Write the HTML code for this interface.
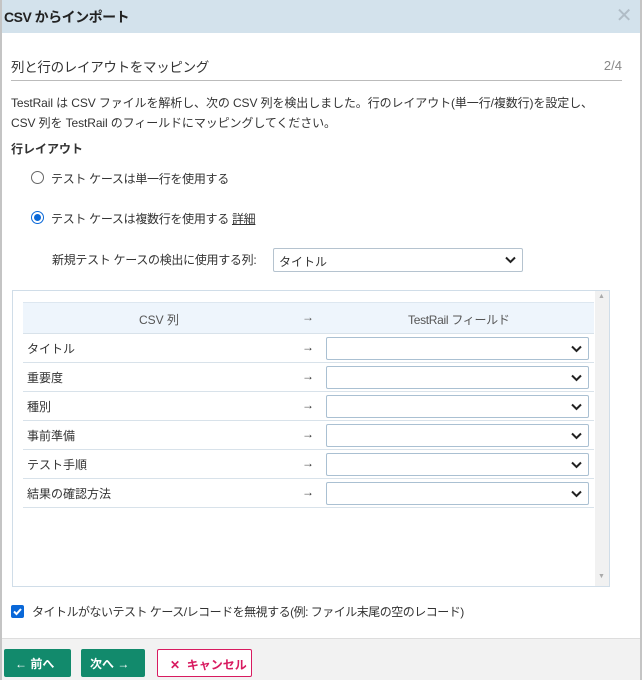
<!DOCTYPE html>
<html><head><meta charset="utf-8"><style>
*{box-sizing:border-box;margin:0;padding:0}
body{width:642px;height:680px;overflow:hidden;font-family:"Liberation Sans","Noto Sans CJK JP",sans-serif;font-size:12px;color:#333;background:#fff;position:relative;white-space:nowrap}
.abs{position:absolute}
.title{left:0;top:0;width:642px;height:33px;background:#d3e2ec;font-size:14px;font-weight:bold;padding:7px 0 0 4px;color:#222;letter-spacing:-0.5px}
.x{right:10px;top:3px;color:#b0bcc6;font-size:20px;font-weight:normal}
.sel{position:absolute;border:1px solid #aac0d2;border-radius:2px;background:#fff;height:23px}
.sel svg{position:absolute;right:6px;top:7px}
.row{position:absolute;left:23px;width:571px;height:29px;border-bottom:1px solid #d8e2ea}
.row span{position:absolute;left:4px;top:6px}
.row .ar{left:279px;font-weight:bold}
.btn{position:absolute;top:649px;height:28px;border-radius:2px;font-weight:bold;font-size:12px;padding-top:6px;white-space:nowrap}
</style></head><body>
<div class="abs title">CSV からインポート<span class="abs x">✕</span></div>
<div class="abs" style="left:0;top:0;width:2px;height:680px;background:#c4c4c4"></div>
<div class="abs" style="right:0;top:0;width:2px;height:680px;background:#c4c4c4"></div>
<div class="abs" style="left:11px;top:56px;font-size:13.5px;color:#333;letter-spacing:-0.3px">列と行のレイアウトをマッピング</div>
<div class="abs" style="right:20px;top:58px;font-size:13px;color:#888">2/4</div>
<div class="abs" style="left:11px;top:80px;width:611px;height:1px;background:#bbb"></div>
<div class="abs" style="left:11px;top:93px;font-size:12px;line-height:20px;letter-spacing:-0.1px">TestRail は CSV ファイルを解析し、次の CSV 列を検出しました。行のレイアウト(単一行/複数行)を設定し、<br>CSV 列を TestRail のフィールドにマッピングしてください。</div>
<div class="abs" style="left:11px;top:140px;font-weight:bold">行レイアウト</div>
<div class="abs" style="left:31px;top:171px;width:13px;height:13px;border:1px solid #666;border-radius:50%"></div>
<div class="abs" style="left:51px;top:170px;letter-spacing:-0.3px">テスト ケースは単一行を使用する</div>
<div class="abs" style="left:31px;top:211px;width:13px;height:13px;border:1px solid #0a68d8;border-radius:50%;background:#fff"><div style="margin:2px;width:7px;height:7px;border-radius:50%;background:#0a68d8"></div></div>
<div class="abs" style="left:51px;top:210px;letter-spacing:-0.3px">テスト ケースは複数行を使用する <u>詳細</u></div>
<div class="abs" style="left:52px;top:251px;letter-spacing:-0.3px">新規テスト ケースの検出に使用する列:</div>
<div class="sel" style="left:273px;top:248px;width:250px;height:24px;border-color:#b5c3cf"><span style="position:absolute;left:5px;top:4px">タイトル</span><svg width="11" height="8" viewBox="0 0 11 8"><path d="M1 1.5l4.5 4.5 4.5-4.5" stroke="#222" stroke-width="2" fill="none"/></svg></div>
<div class="abs" style="left:12px;top:290px;width:598px;height:297px;border:1px solid #d0dde8"></div>
<div class="abs" style="left:595px;top:291px;width:14px;height:295px;background:#f1f1f1"></div>
<div class="abs" style="left:598px;top:293px;font-size:7px;color:#aaa">▲</div>
<div class="abs" style="left:598px;top:573px;font-size:7px;color:#aaa">▼</div>
<div class="abs" style="left:23px;top:302px;width:571px;height:32px;background:#eef5fc;border-top:1px solid #dde7f0;border-bottom:1px solid #d8e2ea;color:#555">
<span class="abs" style="left:116px;top:8px">CSV 列</span><span class="abs" style="left:279px;top:7px;font-weight:bold">→</span><span class="abs" style="left:385px;top:8px;letter-spacing:-0.3px">TestRail フィールド</span></div>
<div class="row" style="top:334px"><span>タイトル</span><span class="ar">→</span></div>
<div class="row" style="top:363px"><span>重要度</span><span class="ar">→</span></div>
<div class="row" style="top:392px"><span>種別</span><span class="ar">→</span></div>
<div class="row" style="top:421px"><span>事前準備</span><span class="ar">→</span></div>
<div class="row" style="top:450px"><span>テスト手順</span><span class="ar">→</span></div>
<div class="row" style="top:479px"><span>結果の確認方法</span><span class="ar">→</span></div>
<div class="sel" style="left:326px;top:337px;width:263px"><svg width="11" height="8" viewBox="0 0 11 8"><path d="M1 1.5l4.5 4.5 4.5-4.5" stroke="#222" stroke-width="2" fill="none"/></svg></div>
<div class="sel" style="left:326px;top:366px;width:263px"><svg width="11" height="8" viewBox="0 0 11 8"><path d="M1 1.5l4.5 4.5 4.5-4.5" stroke="#222" stroke-width="2" fill="none"/></svg></div>
<div class="sel" style="left:326px;top:395px;width:263px"><svg width="11" height="8" viewBox="0 0 11 8"><path d="M1 1.5l4.5 4.5 4.5-4.5" stroke="#222" stroke-width="2" fill="none"/></svg></div>
<div class="sel" style="left:326px;top:424px;width:263px"><svg width="11" height="8" viewBox="0 0 11 8"><path d="M1 1.5l4.5 4.5 4.5-4.5" stroke="#222" stroke-width="2" fill="none"/></svg></div>
<div class="sel" style="left:326px;top:453px;width:263px"><svg width="11" height="8" viewBox="0 0 11 8"><path d="M1 1.5l4.5 4.5 4.5-4.5" stroke="#222" stroke-width="2" fill="none"/></svg></div>
<div class="sel" style="left:326px;top:482px;width:263px"><svg width="11" height="8" viewBox="0 0 11 8"><path d="M1 1.5l4.5 4.5 4.5-4.5" stroke="#222" stroke-width="2" fill="none"/></svg></div>
<div class="abs" style="left:11px;top:605px;width:13px;height:13px;background:#0a68d8;border-radius:2px"><svg width="13" height="13" viewBox="0 0 13 13" style="display:block"><path d="M3 6.5l2.5 2.5 4.5-5" stroke="#fff" stroke-width="2" fill="none"/></svg></div>
<div class="abs" style="left:32px;top:603px;letter-spacing:-0.5px">タイトルがないテスト ケース/レコードを無視する(例: ファイル末尾の空のレコード)</div>
<div class="abs" style="left:2px;top:638px;width:638px;height:42px;background:#f2f2f2;border-top:1px solid #ddd"></div>
<div class="btn" style="left:4px;width:67px;background:#128a6c;color:#fff;padding-left:11px">← 前へ</div>
<div class="btn" style="left:81px;width:64px;background:#128a6c;color:#fff;padding-left:9px">次へ →</div>
<div class="btn" style="left:157px;width:95px;background:#fff;border:1px solid #d81b60;color:#d81b60;padding-left:12px">✕&nbsp; キャンセル</div>
</body></html>
